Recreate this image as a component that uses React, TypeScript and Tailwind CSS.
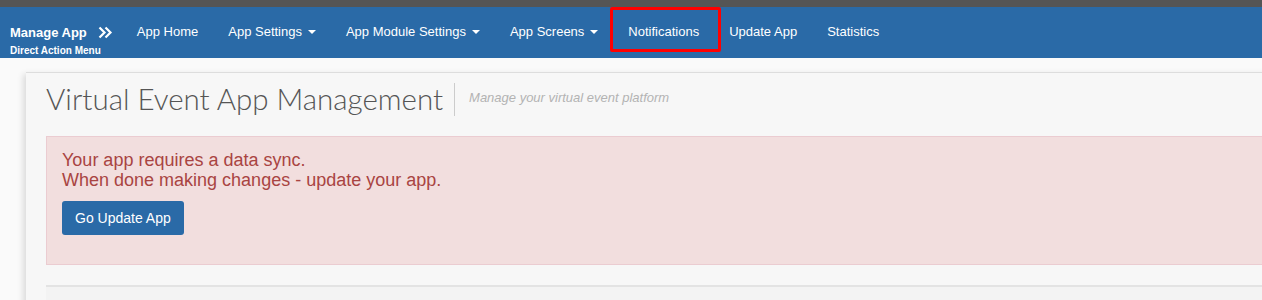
import React from 'react';

const navItems = [
  { label: 'App Home' },
  { label: 'App Settings', caret: true },
  { label: 'App Module Settings', caret: true },
  { label: 'App Screens', caret: true },
  { label: 'Notifications', active: true },
  { label: 'Update App' },
  { label: 'Statistics' },
];

const Caret = () => (
  <span className="ml-[6px] inline-block h-0 w-0 border-x-[4px] border-t-[4px] border-x-transparent border-t-white align-middle" />
);

const App = () => {
  return (
    <div className="h-[300px] w-full overflow-hidden bg-[#fafafa] font-['Liberation_Sans',Arial,sans-serif]">
      <div className="h-[7px] bg-[#555555]" />

      <nav className="flex h-[51px] items-start bg-[#2a6aa7] text-white">
        <div className="flex flex-col pl-[10px] pt-[18px]">
          <div className="flex items-center">
            <span className="text-[13px] font-bold leading-[15px]">Manage App</span>
            <svg className="ml-[11px]" width="15" height="13" viewBox="0 0 15 13" fill="none" stroke="white" strokeWidth="2.2">
              <path d="M1.5 1.5 L6.5 6.5 L1.5 11.5" />
              <path d="M7.5 1.5 L12.5 6.5 L7.5 11.5" />
            </svg>
          </div>
          <span className="mt-[5px] text-[10px] font-bold leading-[12px]">Direct Action Menu</span>
        </div>

        <ul className="ml-[9px] flex">
          {navItems.map((item) =>
            item.active ? (
              <li
                key={item.label}
                className="ml-[-3px] mr-[-7px] flex h-[45px] items-center rounded-[2px] border-[3px] border-[#ff0000] pl-[15px] pr-[19px] pt-[4px] text-[13px] leading-[18px]"
              >
                {item.label}
              </li>
            ) : (
              <li
                key={item.label}
                className="flex h-[45px] items-center px-[15px] pt-[4px] text-[13px] leading-[18px]"
              >
                {item.label}
                {item.caret && <Caret />}
              </li>
            )
          )}
        </ul>
      </nav>

      <div className="pt-[14px]">
        <div className="ml-[26px] w-[1300px] border-t border-[#dddddd] bg-[#f7f7f7] px-[20px] pt-[5px] shadow-[-3px_2px_6px_rgba(0,0,0,0.12)]">
          <div className="flex items-center">
            <h1 className="font-['Lato',sans-serif] text-[29.5px] font-light leading-[42px] text-[#555555]">
              Virtual Event App Management
            </h1>
            <div className="ml-[11px] h-[33px] border-l border-[#cccccc]" />
            <span className="ml-[14px] mt-[-2px] text-[13px] italic text-[#b3b3b3]">
              Manage your virtual event platform
            </span>
          </div>

          <div className="mt-[16px] h-[129px] border border-[#ebccd1] bg-[#f2dede] px-[15px] pt-[13px] text-[#a94442]">
            <p className="text-[18px] leading-[20px]">Your app requires a data sync.</p>
            <p className="text-[18px] leading-[20px]">When done making changes - update your app.</p>
            <button className="mt-[11px] h-[34px] rounded-[3px] bg-[#2a6aa7] px-[13px] text-[14px] text-white">
              Go Update App
            </button>
          </div>

          <div className="mt-[20px] h-[40px] border-t-2 border-[#e3e3e3] bg-[#f3f3f3]" />
        </div>
      </div>
    </div>
  );
};

export default App;
